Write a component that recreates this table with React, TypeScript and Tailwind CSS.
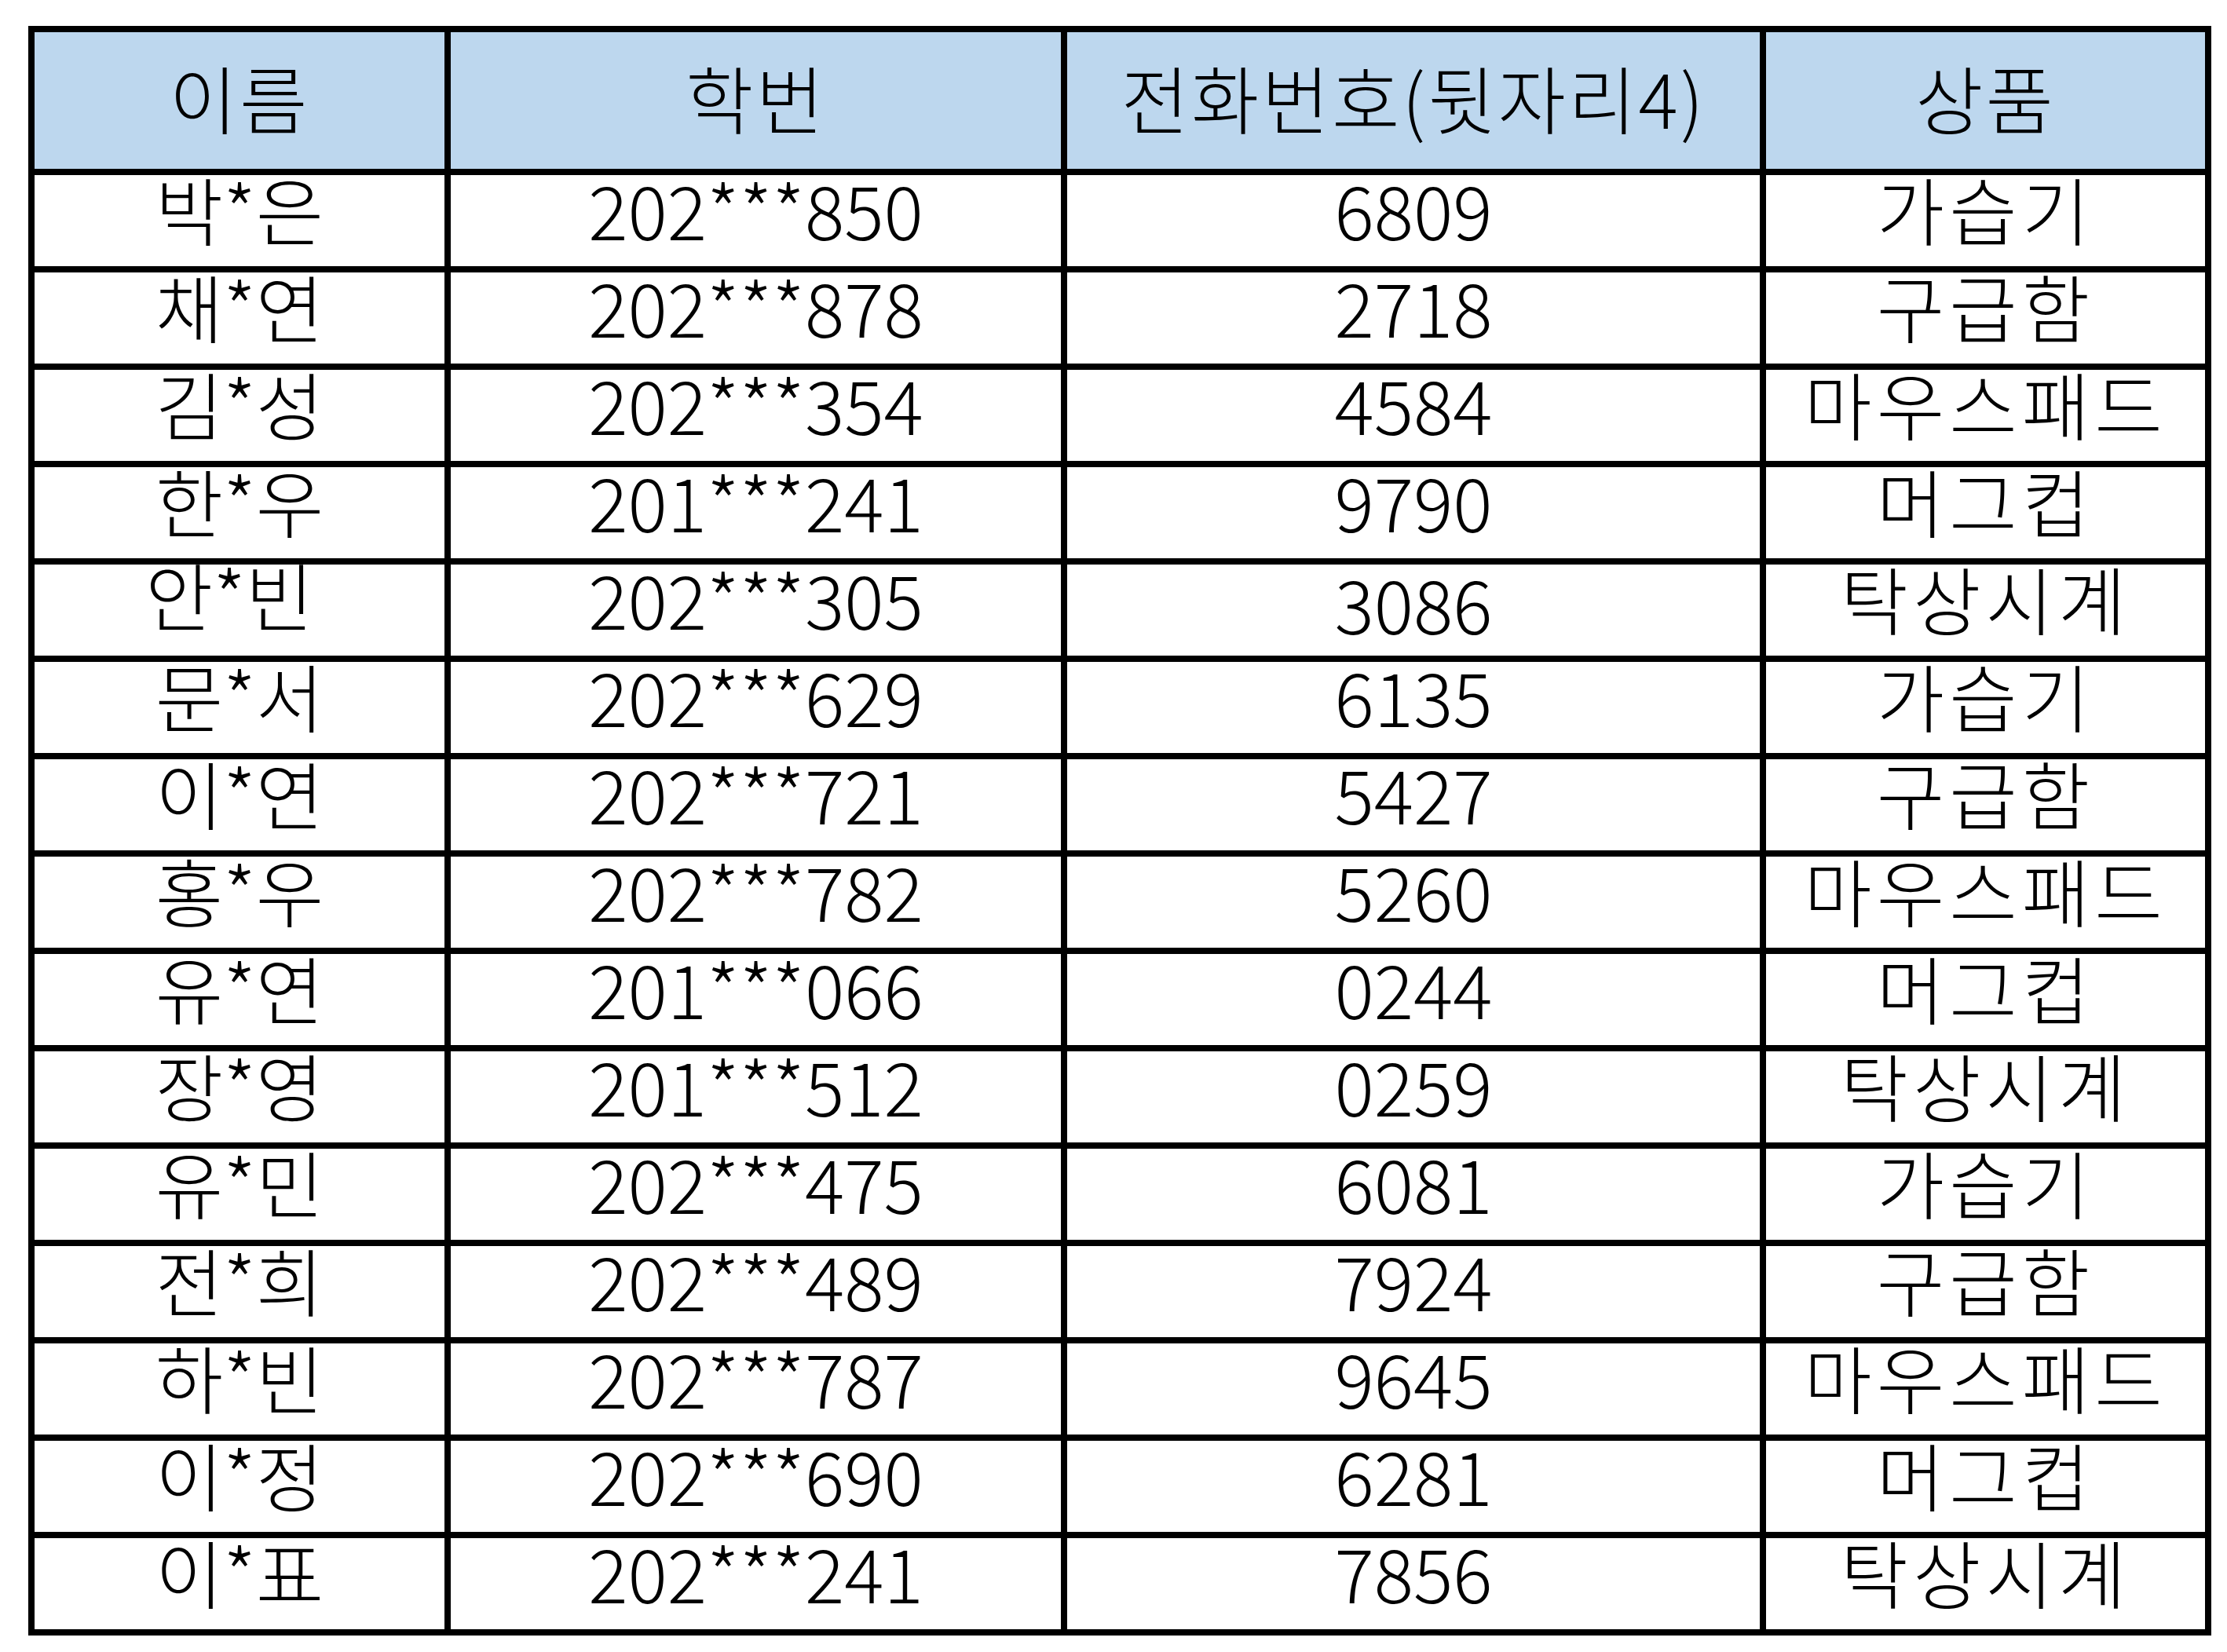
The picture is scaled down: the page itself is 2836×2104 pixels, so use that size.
import React from "react";

type Row = { name: string; id: string; phone: string; prize: string };

const rows: Row[] = [
  { name: "박*은", id: "202***850", phone: "6809", prize: "가습기" },
  { name: "채*연", id: "202***878", phone: "2718", prize: "구급함" },
  { name: "김*성", id: "202***354", phone: "4584", prize: "마우스패드" },
  { name: "한*우", id: "201***241", phone: "9790", prize: "머그컵" },
  { name: "안*빈", id: "202***305", phone: "3086", prize: "탁상시계" },
  { name: "문*서", id: "202***629", phone: "6135", prize: "가습기" },
  { name: "이*연", id: "202***721", phone: "5427", prize: "구급함" },
  { name: "홍*우", id: "202***782", phone: "5260", prize: "마우스패드" },
  { name: "유*연", id: "201***066", phone: "0244", prize: "머그컵" },
  { name: "장*영", id: "201***512", phone: "0259", prize: "탁상시계" },
  { name: "유*민", id: "202***475", phone: "6081", prize: "가습기" },
  { name: "전*희", id: "202***489", phone: "7924", prize: "구급함" },
  { name: "하*빈", id: "202***787", phone: "9645", prize: "마우스패드" },
  { name: "이*정", id: "202***690", phone: "6281", prize: "머그컵" },
  { name: "이*표", id: "202***241", phone: "7856", prize: "탁상시계" },
];

const headers = ["이름", "학번", "전화번호(뒷자리4)", "상품"];

const HeadCell = ({ children }: { children: React.ReactNode }) => (
  <div className="bg-[#bdd7ee] flex items-center justify-center pb-[10px]">
    <span className="text-[94px] leading-none tracking-[3px] whitespace-nowrap">{children}</span>
  </div>
);

const Cell = ({
  children,
  className = "",
  pad = "pb-[32px]",
}: {
  children: React.ReactNode;
  className?: string;
  pad?: string;
}) => (
  <div className={`bg-white flex items-center justify-center ${pad}`}>
    <span className={`text-[94px] leading-none whitespace-nowrap ${className}`}>{children}</span>
  </div>
);

export default function App() {
  return (
    <div className="w-[2836px] h-[2104px] bg-white pt-[33px] pl-[36px] text-black font-light font-['Noto_Sans_CJK_KR','Noto_Sans',sans-serif]">
      <div className="grid w-fit grid-cols-[522px_777px_882px_559px] grid-rows-[174px_repeat(15,116px)] gap-[8px] bg-black p-[8px]">
        {headers.map((h) => (
          <HeadCell key={h}>{h}</HeadCell>
        ))}
        {rows.map((r, i) => (
          <React.Fragment key={i}>
            {/* 5행은 원본에서 살짝 어긋나 있음 */}
            <Cell pad={i === 4 ? "pb-[42px] pr-[26px]" : "pb-[32px]"}>{r.name}</Cell>
            <Cell>{r.id}</Cell>
            <Cell pad={i === 4 ? "pb-[20px]" : "pb-[32px]"}>{r.phone}</Cell>
            <Cell className="tracking-[6px]">{r.prize}</Cell>
          </React.Fragment>
        ))}
      </div>
    </div>
  );
}
